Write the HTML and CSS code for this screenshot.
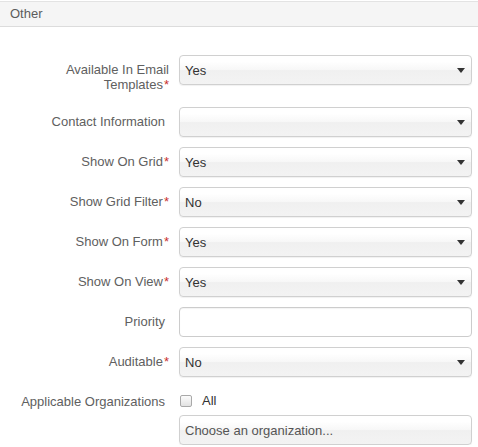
FILE: index.html
```html
<!DOCTYPE html>
<html>
<head>
<meta charset="utf-8">
<link rel="stylesheet" href="styles.css">
</head>
<body>
<div class="panel-head">Other</div>
<form class="form">
  <div class="row">
    <label class="lbl"><span class="line">Available In Email</span><span class="line">Templates<span class="req">*</span></span></label>
    <div class="select"><span class="val">Yes</span><span class="caret"></span></div>
  </div>
  <div class="row">
    <label class="lbl opt">Contact Information</label>
    <div class="select"><span class="val"></span><span class="caret"></span></div>
  </div>
  <div class="row">
    <label class="lbl">Show On Grid<span class="req">*</span></label>
    <div class="select"><span class="val">Yes</span><span class="caret"></span></div>
  </div>
  <div class="row">
    <label class="lbl">Show Grid Filter<span class="req">*</span></label>
    <div class="select"><span class="val">No</span><span class="caret"></span></div>
  </div>
  <div class="row">
    <label class="lbl">Show On Form<span class="req">*</span></label>
    <div class="select"><span class="val">Yes</span><span class="caret"></span></div>
  </div>
  <div class="row">
    <label class="lbl">Show On View<span class="req">*</span></label>
    <div class="select"><span class="val">Yes</span><span class="caret"></span></div>
  </div>
  <div class="row">
    <label class="lbl opt">Priority</label>
    <div class="input"></div>
  </div>
  <div class="row">
    <label class="lbl">Auditable<span class="req">*</span></label>
    <div class="select"><span class="val">No</span><span class="caret"></span></div>
  </div>
  <div class="row">
    <label class="lbl opt">Applicable Organizations</label>
    <div class="ctrl">
      <div class="check-line"><span class="checkbox"></span><span class="check-text">All</span></div>
      <div class="select multi"><span class="val muted">Choose an organization...</span></div>
    </div>
  </div>
</form>
</body>
</html>
```
FILE: styles.css
```css
html, body {
  margin: 0;
  padding: 0;
  background: #fff;
}
body {
  font-family: "Liberation Sans", Arial, sans-serif;
  font-size: 13px;
  color: #333;
}
.panel-head {
  margin-top: 1px;
  height: 24px;
  line-height: 24px;
  padding-left: 10px;
  background: #f5f5f5;
  border-top: 1px solid #e3e3e3;
  border-bottom: 1px solid #dcdcdc;
  color: #5c5c5c;
}
.form {
  display: flex;
  flex-direction: column;
  gap: 10px;
  padding: 28px 6px 0 0;
}
.row {
  display: grid;
  grid-template-columns: 169px 1fr;
  column-gap: 10px;
  align-items: start;
}
.lbl {
  padding: 7px 0 5px 15px;
  text-align: right;
  line-height: 15px;
  color: #606060;
}
.lbl.opt {
  padding-right: 4px;
}
.line {
  display: block;
}
.req {
  margin-left: 1px;
  color: #c9302c;
}
.select {
  box-sizing: border-box;
  height: 30px;
  display: flex;
  align-items: center;
  padding: 0 6px 0 5px;
  border: 1px solid #d0d0d0;
  border-radius: 4px;
  background: linear-gradient(#ffffff 20%, #f7f7f7 50%, #f0f0f0 52%, #f3f3f3 100%);
  box-shadow: 0 1px 1px rgba(0, 0, 0, 0.06);
  color: #333;
}
.val {
  flex: 1;
}
.val.muted {
  color: #555;
}
.caret {
  width: 0;
  height: 0;
  border-left: 4.5px solid transparent;
  border-right: 4.5px solid transparent;
  border-top: 5px solid #333;
}
.input {
  box-sizing: border-box;
  height: 30px;
  border: 1px solid #cccccc;
  border-radius: 4px;
  background: #fff;
  box-shadow: inset 0 1px 1px rgba(0, 0, 0, 0.05);
}
.ctrl {
  display: flex;
  flex-direction: column;
}
.check-line {
  display: flex;
  align-items: center;
  height: 15px;
  padding-top: 6px;
  margin-bottom: 7px;
  line-height: 15px;
}
.checkbox {
  box-sizing: border-box;
  width: 12px;
  height: 12px;
  margin-left: 1px;
  border: 1px solid #a9a9a9;
  border-radius: 2px;
  background: linear-gradient(#fcfcfc, #e2e2e2);
}
.check-text {
  margin-left: 10px;
  color: #333;
}
.select.multi {
  padding-left: 5px;
}
```
